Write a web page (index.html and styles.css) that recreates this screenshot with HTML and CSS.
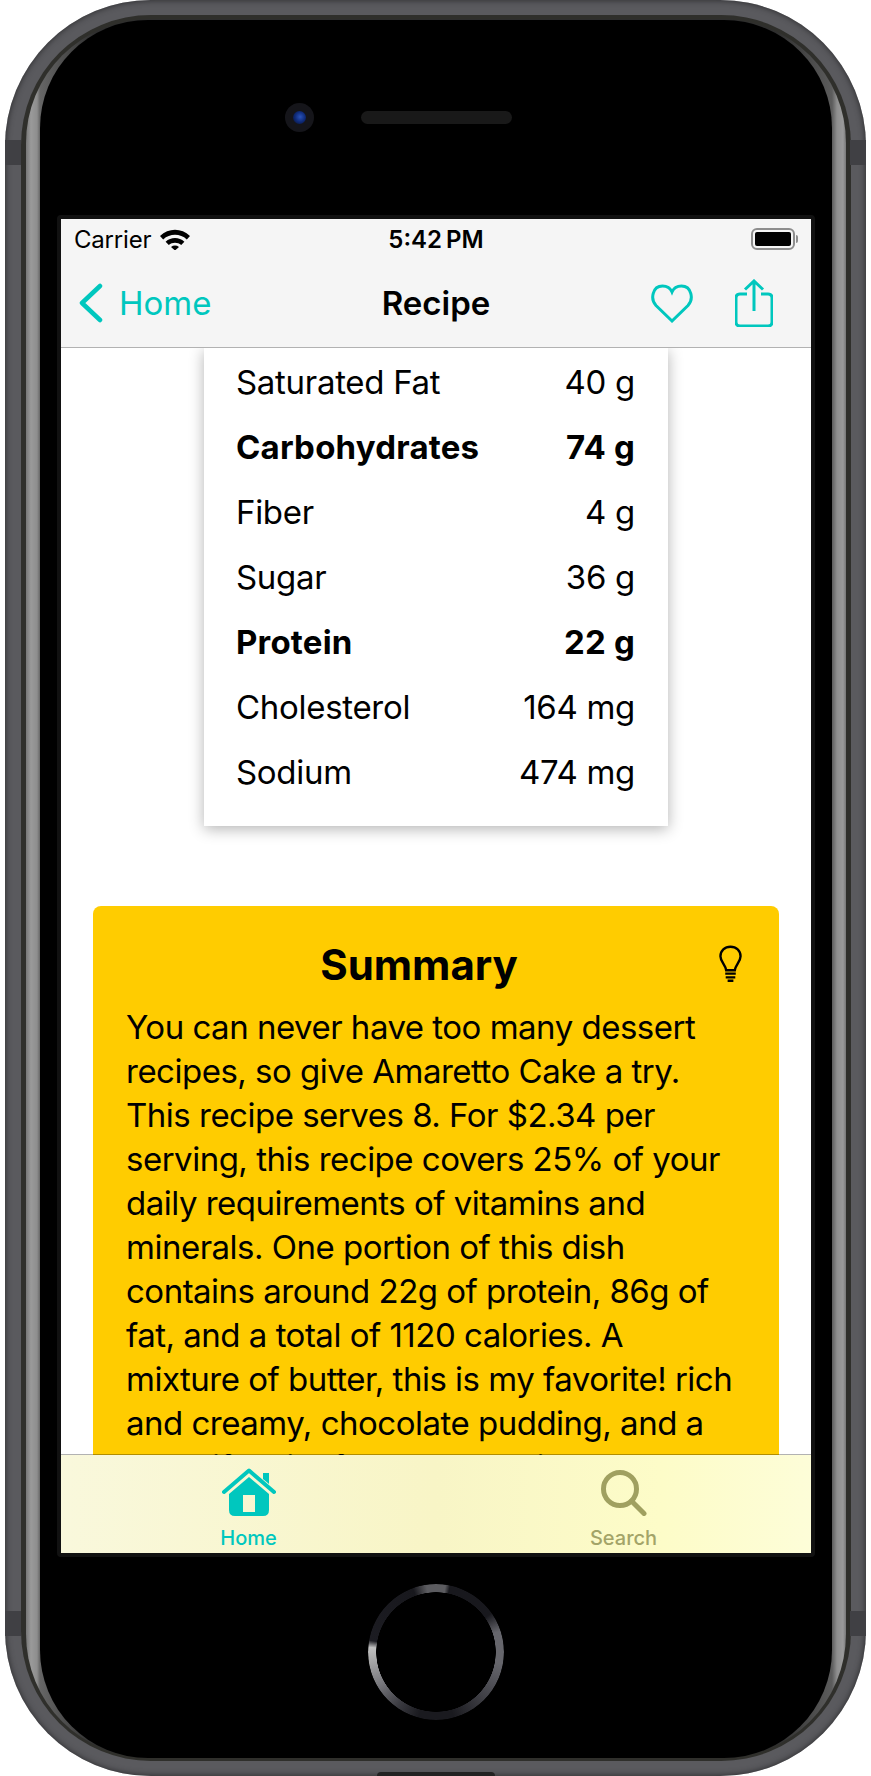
FILE: index.html
```html
<!DOCTYPE html>
<html lang="en">
<head>
    <meta charset="UTF-8">
    <meta name="viewport" content="width=device-width, initial-scale=1.0">
    <title>Recipe</title>
    <link rel="stylesheet" href="styles.css">
</head>
<body>
    <div class="device">
        <span class="side-btn mute"></span>
        <span class="side-btn vol-up"></span>
        <span class="side-btn vol-down"></span>
        <span class="side-btn power"></span>
        <span class="band band-tl"></span>
        <span class="band band-tr"></span>
        <span class="band band-bl"></span>
        <span class="band band-br"></span>
        <span class="port"></span>

        <div class="rim">
            <div class="bezel">
                <div class="face">
                    <div class="sensors">
                        <div class="camera"><span class="lens"></span></div>
                        <div class="speaker"></div>
                    </div>

                    <div class="screen">
                        <header class="topbar">
                            <div class="status">
                                <div class="status-left">
                                    <span>Carrier</span>
                                    <svg class="wifi" viewBox="0 0 30 21">
                                        <path d="M0 7 C8.500 -1.200 21.500 -1.200 30 7 L26.800 10.400 C20.200 4.200 9.800 4.200 3.200 10.400 Z" />
                                        <path d="M5.600 12.800 C11 7.800 19 7.800 24.400 12.800 L21.200 16.100 C17.800 12.900 12.200 12.900 8.800 16.100 Z" />
                                        <path d="M11 17.900 C13.400 16 16.600 16 19 17.900 L15 21.500 Z" />
                                    </svg>
                                </div>
                                <div class="status-time">5:42 PM</div>
                                <div class="status-right">
                                    <div class="battery"><span class="battery-fill"></span></div>
                                    <span class="battery-nub"></span>
                                </div>
                            </div>
                            <nav class="navbar">
                                <div class="nav-back">
                                    <svg class="chevron" viewBox="0 0 24 40">
                                        <path d="M21 3 L3 20 L21 37" />
                                    </svg>
                                    <span>Home</span>
                                </div>
                                <div class="nav-title">Recipe</div>
                                <div class="nav-actions">
                                    <svg class="heart" viewBox="0 0 42 39">
                                        <path d="M21 37 L5 21.500 C-1 15 1.500 2 11.500 2 C16 2 19.500 4.500 21 8 C22.500 4.500 26 2 30.500 2 C40.500 2 43 15 37 21.500 Z" />
                                    </svg>
                                    <svg class="share" viewBox="0 0 38 48">
                                        <path d="M12 15 H5 Q1 15 1 19 V43 Q1 47 5 47 H33 Q37 47 37 43 V19 Q37 15 33 15 H26" />
                                        <path d="M19 32 V2 M10 10.500 L19 2 L28 10.500" />
                                    </svg>
                                </div>
                            </nav>
                        </header>

                        <main class="content">
                            <section class="nutrition">
                                <div class="row"><span>Saturated Fat</span><span>40 g</span></div>
                                <div class="row bold"><span>Carbohydrates</span><span>74 g</span></div>
                                <div class="row"><span>Fiber</span><span>4 g</span></div>
                                <div class="row"><span>Sugar</span><span>36 g</span></div>
                                <div class="row bold"><span>Protein</span><span>22 g</span></div>
                                <div class="row"><span>Cholesterol</span><span>164 mg</span></div>
                                <div class="row"><span>Sodium</span><span>474 mg</span></div>
                            </section>

                            <section class="summary">
                                <div class="summary-head">
                                    <h2>Summary</h2>
                                    <svg class="bulb" viewBox="0 0 24 39">
                                        <path d="M7.500 26 C6.500 20 1.500 17 1.500 11.500 C1.500 5.500 6 1.500 12 1.500 C18 1.500 22.500 5.500 22.500 11.500 C22.500 17 17.500 20 16.500 26 Z" />
                                        <path d="M6.500 29.500 H17.500 M7 33.500 H17 M9 37 H15" />
                                    </svg>
                                </div>
                                <p>You can never have too many dessert<br>
                                recipes, so give Amaretto Cake a try.<br>
                                This recipe serves 8. For $2.34 per<br>
                                serving, this recipe covers 25% of your<br>
                                daily requirements of vitamins and<br>
                                minerals. One portion of this dish<br>
                                contains around 22g of protein, 86g of<br>
                                fat, and a total of 1120 calories. A<br>
                                mixture of butter, this is my favorite! rich<br>
                                and creamy, chocolate pudding, and a<br>
                                beautiful bit of chocolate will be</p>
                            </section>
                        </main>

                        <footer class="tabbar">
                            <div class="tab active">
                                <svg class="tab-icon home-icon" viewBox="0 0 54 48">
                                    <path class="roof" d="M2 24 L27 2.500 L52 24" />
                                    <path d="M41 5 H47 V16 L41 11 Z" />
                                    <path fill-rule="evenodd" d="M27 9 L47 26 V42 Q47 48 41 48 H13 Q7 48 7 42 V26 Z M21 27 V44 H33 V27 Z" />
                                </svg>
                                <span>Home</span>
                            </div>
                            <div class="tab muted">
                                <svg class="tab-icon search-icon" viewBox="0 0 46 46">
                                    <circle cx="19" cy="19" r="16.500" />
                                    <path d="M30.500 31 L43 43.500" />
                                </svg>
                                <span>Search</span>
                            </div>
                        </footer>
                    </div>

                    <div class="home-button"></div>
                </div>
            </div>
        </div>
    </div>
</body>
</html>
```

FILE: styles.css
```css
html, body {
    margin: 0;
    padding: 0;
    background: #fff;
}
body {
    width: 871px;
    height: 1776px;
    overflow: hidden;
    font-family: 'Inter', 'Liberation Sans', sans-serif;
    color: #000;
}

/* phone hardware */
.device {
    position: relative;
    box-sizing: border-box;
    width: 861px;
    height: 1776px;
    margin-left: 5px;
    padding: 15px 15px 15px 16px;
    background: #5a5a5e;
    border-radius: 146px;
    box-shadow: inset 0 0 6px #262628;
}
.rim {
    box-sizing: border-box;
    height: 100%;
    padding: 4px 5px 3px;
    background: #2f2f2b;
    border-radius: 130px;
}
.bezel {
    box-sizing: border-box;
    height: 100%;
    padding: 1px 14px 0;
    background: linear-gradient(90deg, #777 0, #9a9a9a 5px, #8e8e8e 11px, #666 14px, #2e2e2e 70px, #2e2e2e 750px, #5c5c5c 806px, #8e8e8e 811px, #9a9a9a 817px, #777 820px);
    border-radius: 124px;
}
.face {
    box-sizing: border-box;
    height: 100%;
    padding: 0 17px;
    background: #000;
    border-radius: 108px;
}
.side-btn {
    position: absolute;
    z-index: -1;
    width: 9px;
    background: linear-gradient(180deg, #2b2b2e, #5c5c62 8%, #55555a 92%, #2b2b2e);
    border-radius: 3px;
}
.mute { left: -4px; top: 227px; height: 70px; }
.vol-up { left: -4px; top: 378px; height: 132px; }
.vol-down { left: -4px; top: 540px; height: 132px; }
.power { right: -4px; top: 378px; height: 132px; }
.band {
    position: absolute;
    width: 16px;
    height: 25px;
    background: #404044;
}
.band-tl { left: 0; top: 140px; }
.band-tr { right: 0; top: 140px; }
.band-bl { left: 0; top: 1611px; }
.band-br { right: 0; top: 1611px; }
.port {
    position: absolute;
    left: 372px;
    bottom: 0;
    width: 118px;
    height: 4px;
    background: #222;
    border-radius: 5px 5px 0 0;
}
.sensors {
    display: flex;
    align-items: center;
    gap: 47px;
    box-sizing: border-box;
    height: 195px;
    padding: 0 0 0 228px;
}
.camera {
    display: flex;
    align-items: center;
    justify-content: center;
    width: 29px;
    height: 29px;
    background: #15151a;
    border-radius: 50%;
}
.lens {
    width: 13px;
    height: 13px;
    background: radial-gradient(circle at 55% 45%, #2a52b8 0, #0e2a78 50%, #0a0f24 100%);
    border-radius: 50%;
}
.speaker {
    width: 151px;
    height: 13px;
    background: #191919;
    border-radius: 7px;
}
.home-button {
    width: 136px;
    height: 136px;
    margin: 27px auto 0;
    border-radius: 50%;
    background: conic-gradient(#5c5c60 0deg, #5c5c60 8deg, #18181d 12deg, #18181d 55deg, #66666c 72deg, #66666c 100deg, #44444a 130deg, #1a1a1f 165deg, #1a1a1f 195deg, #3a3a40 215deg, #77777c 240deg, #b4b4b4 268deg, #c0c0c0 274deg, #1c1c22 280deg, #18181d 340deg, #5c5c60 352deg);
    -webkit-mask: radial-gradient(closest-side, transparent calc(100% - 8.500px), #000 calc(100% - 8px));
    mask: radial-gradient(closest-side, transparent calc(100% - 8.500px), #000 calc(100% - 8px));
}

/* screen */
.screen {
    display: flex;
    flex-direction: column;
    box-sizing: border-box;
    height: 1342px;
    border: 4px solid #111;
    border-radius: 4px;
    background: #fff;
    overflow: hidden;
}
.topbar {
    position: relative;
    z-index: 2;
    height: 129px;
    flex: none;
    box-sizing: border-box;
    background: #f5f5f5;
    border-bottom: 1px solid #b2b2b2;
}
.status {
    display: grid;
    grid-template-columns: 1fr auto 1fr;
    align-items: center;
    height: 40px;
    padding: 0 13px;
    font-size: 24px;
}
.status-left {
    display: flex;
    align-items: center;
    gap: 9px;
    letter-spacing: -0.2px;
}
.wifi {
    width: 30px;
    height: 21px;
    fill: #000;
}
.status-time {
    font-weight: 600;
    font-size: 24px;
    word-spacing: -2px;
}
.status-right {
    display: flex;
    align-items: center;
    justify-content: flex-end;
    gap: 1px;
}
.battery {
    box-sizing: border-box;
    width: 44px;
    height: 22px;
    padding: 2px;
    border: 2px solid #8e8e8e;
    border-radius: 6px;
}
.battery-fill {
    display: block;
    height: 100%;
    background: #000;
    border-radius: 2px;
}
.battery-nub {
    width: 2px;
    height: 8px;
    background: #8e8e8e;
    border-radius: 0 2px 2px 0;
}
.navbar {
    position: relative;
    display: flex;
    align-items: center;
    justify-content: space-between;
    height: 88px;
    padding: 0 38px 0 18px;
    color: #00c7be;
    font-size: 33px;
}
.nav-back {
    display: flex;
    align-items: center;
    gap: 16px;
}
.chevron {
    width: 24px;
    height: 40px;
    fill: none;
    stroke: #00c7be;
    stroke-width: 4.500;
    stroke-linecap: round;
    stroke-linejoin: round;
}
.nav-title {
    position: absolute;
    left: 0;
    right: 0;
    text-align: center;
    color: #000;
    font-weight: 600;
}
.nav-actions {
    display: flex;
    align-items: center;
    gap: 42px;
}
.heart {
    width: 42px;
    height: 39px;
    fill: none;
    stroke: #00c7be;
    stroke-width: 3;
}
.share {
    width: 38px;
    height: 48px;
    fill: none;
    stroke: #00c7be;
    stroke-width: 3;
}

.content {
    flex: 1;
    min-height: 0;
    overflow: hidden;
}
.nutrition {
    box-sizing: border-box;
    width: 464px;
    height: 478px;
    margin: 0 auto;
    padding: 1px 33px 0 32px;
    background: #fff;
    box-shadow: 0 3px 14px rgba(0, 0, 0, 0.3);
}
.row {
    display: flex;
    justify-content: space-between;
    align-items: center;
    height: 65px;
    font-size: 33px;
    letter-spacing: -0.3px;
}
.bold {
    font-weight: 700;
    letter-spacing: 0.2px;
}
.summary {
    margin: 80px 32px 0;
    padding: 0 33px;
    background: #ffcc00;
    border-radius: 8px;
}
.summary-head {
    position: relative;
    padding: 31px 34px 12px 0;
    text-align: center;
}
.summary-head h2 {
    margin: 0;
    font-size: 42px;
    line-height: 56px;
    font-weight: 700;
}
.bulb {
    position: absolute;
    right: 4px;
    top: 39px;
    width: 23px;
    height: 38px;
    fill: none;
    stroke: #000;
    stroke-width: 2.500;
}
.summary p {
    margin: 0;
    font-size: 33px;
    line-height: 44px;
    letter-spacing: -0.500px;
    white-space: nowrap;
}

.tabbar {
    position: relative;
    z-index: 2;
    display: flex;
    flex: none;
    box-sizing: border-box;
    height: 99px;
    margin-top: -1px;
    background: linear-gradient(90deg, #f9f8dc 0, #f8f5c6 50%, #fdfcc8 80%, #fdfdd8 100%) padding-box;
    border-top: 1px solid rgba(0, 0, 0, 0.3);
}
.tab {
    display: flex;
    flex-direction: column;
    align-items: center;
    justify-content: flex-end;
    flex: 1;
    padding-bottom: 3px;
    font-size: 20px;
    font-weight: 500;
}
.tab-icon {
    margin-bottom: 10px;
}
.active {
    color: #00c7be;
}
.muted {
    color: #a3a468;
}
.home-icon {
    width: 54px;
    height: 48px;
    fill: #00c7be;
}
.home-icon .roof {
    fill: none;
    stroke: #00c7be;
    stroke-width: 4;
    stroke-linecap: round;
    stroke-linejoin: round;
}
.search-icon {
    width: 46px;
    height: 46px;
    fill: none;
    stroke: #a0a060;
    stroke-width: 5;
    stroke-linecap: round;
}
```
